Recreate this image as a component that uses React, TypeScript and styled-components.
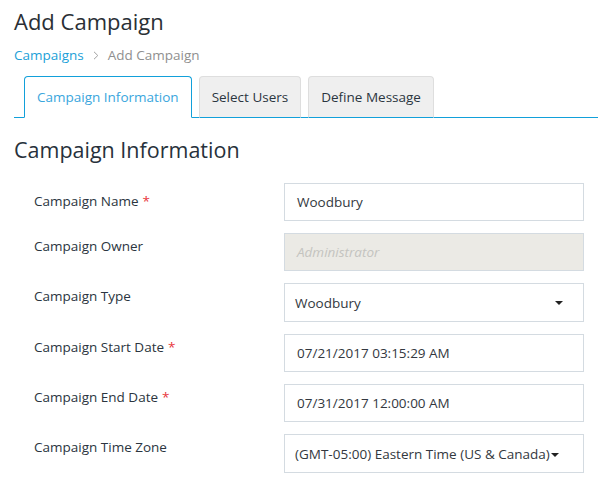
import React from 'react';
import styled, { createGlobalStyle } from 'styled-components';

const GlobalStyle = createGlobalStyle`
  body {
    margin: 0;
    background: #ffffff;
    font-family: "Open Sans", "Noto Sans", sans-serif;
    color: #2b3540;
  }
`;

const Page = styled.div`
  padding: 6px 0 0 14px;
`;

const Title = styled.h1`
  margin: 0;
  font-size: 22px;
  font-weight: 400;
  line-height: 30px;
  color: #2a2f35;
`;

const Breadcrumb = styled.div`
  display: flex;
  align-items: center;
  gap: 9px;
  margin-top: 9px;
  font-size: 13.5px;
  line-height: 20px;
`;

const Crumb = styled.span<{ $active?: boolean }>`
  color: ${p => (p.$active ? '#1b9fd8' : '#8f8f8f')};
`;

const Chevron = () => (
  <svg width="6" height="9" viewBox="0 0 6 9">
    <path d="M1 0.8 L4.8 4.5 L1 8.2" fill="none" stroke="#a0a0a0" strokeWidth="1" />
  </svg>
);

const TabBar = styled.div`
  display: flex;
  gap: 7px;
  margin-top: 11px;
  padding-left: 10px;
  border-bottom: 1px solid #12a0da;
`;

const Tab = styled.div<{ $active?: boolean }>`
  height: 42px;
  box-sizing: border-box;
  padding: 0 12px;
  display: flex;
  align-items: center;
  font-size: 13.5px;
  border-radius: 4px 4px 0 0;
  margin-bottom: -1px;
  border: 1px solid ${p => (p.$active ? '#12a0da' : '#dedede')};
  border-bottom: 1px solid ${p => (p.$active ? '#ffffff' : '#12a0da')};
  background: ${p => (p.$active ? '#ffffff' : '#efefef')};
  color: ${p => (p.$active ? '#3aa6dd' : '#2b3540')};
`;

const Heading = styled.h2`
  margin: 17px 0 18px;
  font-size: 21.5px;
  font-weight: 500;
  line-height: 30px;
  color: #27313b;
`;

const Form = styled.div`
  display: flex;
  flex-direction: column;
  gap: 12px;
  padding-left: 20px;
`;

const Row = styled.div`
  display: grid;
  grid-template-columns: 250px 300px;
  align-items: start;
`;

const Label = styled.label<{ $top?: number }>`
  font-size: 13.5px;
  line-height: 20px;
  padding-top: ${p => p.$top ?? 3}px;
  color: #2b3540;
`;

const Req = styled.span`
  color: #e8353b;
  margin-left: 4px;
`;

const Field = styled.div<{ $disabled?: boolean; $tall?: boolean }>`
  height: ${p => (p.$tall ? 39 : 38)}px;
  box-sizing: border-box;
  border: 1px solid #d4dbe1;
  background: ${p => (p.$disabled ? '#ebeae5' : '#ffffff')};
  display: flex;
  align-items: center;
  padding: 0 12px;
  font-size: 13.5px;
  color: #333840;
`;

const Placeholder = styled.span`
  font-style: italic;
  color: #c4c4c0;
`;

const Select = styled(Field)`
  padding: 0 10px;
  justify-content: space-between;
`;

const Caret = styled.span<{ $tight?: boolean }>`
  display: inline-block;
  vertical-align: middle;
  width: 0;
  height: 0;
  border-left: 4.5px solid transparent;
  border-right: 4.5px solid transparent;
  border-top: 4.5px solid #222;
  margin-right: ${p => (p.$tight ? 0 : 10)}px;
  margin-left: ${p => (p.$tight ? 1 : 0)}px;
`;

export default function App() {
  return (
    <Page>
      <GlobalStyle />
      <Title>Add Campaign</Title>
      <Breadcrumb>
        <Crumb $active>Campaigns</Crumb>
        <Chevron />
        <Crumb>Add Campaign</Crumb>
      </Breadcrumb>
      <TabBar>
        <Tab $active>Campaign Information</Tab>
        <Tab>Select Users</Tab>
        <Tab>Define Message</Tab>
      </TabBar>
      <Heading>Campaign Information</Heading>
      <Form>
        <Row>
          <Label $top={8}>Campaign Name<Req>*</Req></Label>
          <Field>Woodbury</Field>
        </Row>
        <Row>
          <Label>Campaign Owner</Label>
          <Field $disabled><Placeholder>Administrator</Placeholder></Field>
        </Row>
        <Row>
          <Label>Campaign Type</Label>
          <Select $tall>
            <span>Woodbury</span>
            <Caret />
          </Select>
        </Row>
        <Row>
          <Label>Campaign Start Date<Req>*</Req></Label>
          <Field>07/21/2017 03:15:29 AM</Field>
        </Row>
        <Row>
          <Label>Campaign End Date<Req>*</Req></Label>
          <Field>07/31/2017 12:00:00 AM</Field>
        </Row>
        <Row>
          <Label>Campaign Time Zone</Label>
          <Select $tall>
            <span>(GMT-05:00) Eastern Time (US &amp; Canada)<Caret $tight /></span>
          </Select>
        </Row>
      </Form>
    </Page>
  );
}
